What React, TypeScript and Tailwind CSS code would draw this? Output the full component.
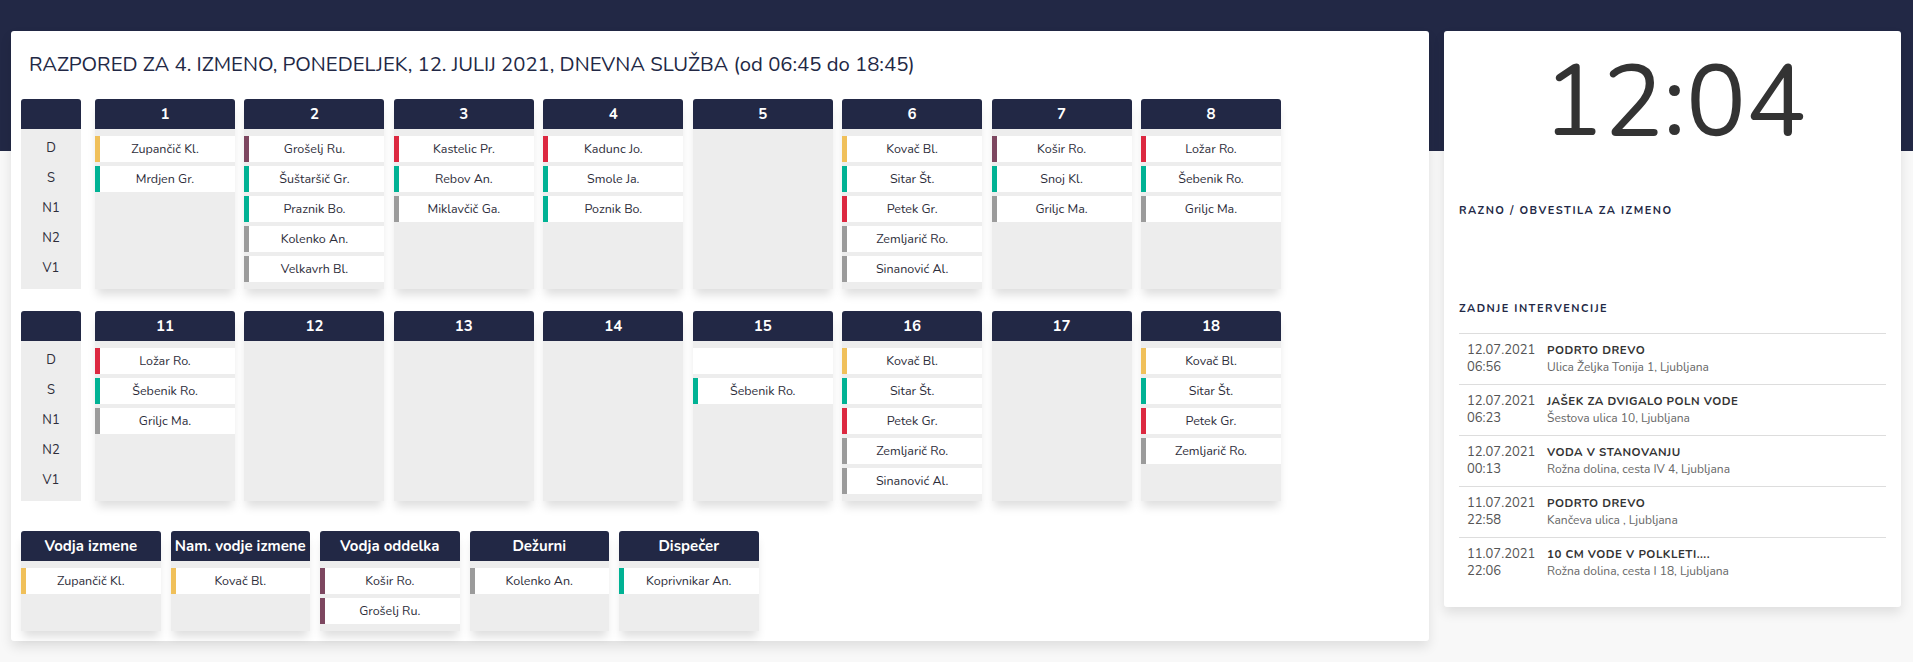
import React from "react";

type Entry = { name: string; color: string } | null;

const Y = "border-l-[#f0c05a]";
const P = "border-l-[#7d4760]";
const T = "border-l-[#00b294]";
const R = "border-l-[#dc2840]";
const G = "border-l-[#9b9b9b]";
const W = "border-l-white";

const row1: { title: string; items: Entry[] }[] = [
  { title: "1", items: [{ name: "Zupančič Kl.", color: Y }, { name: "Mrdjen Gr.", color: T }] },
  {
    title: "2",
    items: [
      { name: "Grošelj Ru.", color: P },
      { name: "Šuštaršič Gr.", color: T },
      { name: "Praznik Bo.", color: T },
      { name: "Kolenko An.", color: G },
      { name: "Velkavrh Bl.", color: G },
    ],
  },
  {
    title: "3",
    items: [
      { name: "Kastelic Pr.", color: R },
      { name: "Rebov An.", color: T },
      { name: "Miklavčič Ga.", color: G },
    ],
  },
  {
    title: "4",
    items: [
      { name: "Kadunc Jo.", color: R },
      { name: "Smole Ja.", color: T },
      { name: "Poznik Bo.", color: T },
    ],
  },
  { title: "5", items: [] },
  {
    title: "6",
    items: [
      { name: "Kovač Bl.", color: Y },
      { name: "Sitar Št.", color: T },
      { name: "Petek Gr.", color: R },
      { name: "Zemljarič Ro.", color: G },
      { name: "Sinanović Al.", color: G },
    ],
  },
  {
    title: "7",
    items: [
      { name: "Košir Ro.", color: P },
      { name: "Snoj Kl.", color: T },
      { name: "Griljc Ma.", color: G },
    ],
  },
  {
    title: "8",
    items: [
      { name: "Ložar Ro.", color: R },
      { name: "Šebenik Ro.", color: T },
      { name: "Griljc Ma.", color: G },
    ],
  },
];

const row2: { title: string; items: Entry[] }[] = [
  {
    title: "11",
    items: [
      { name: "Ložar Ro.", color: R },
      { name: "Šebenik Ro.", color: T },
      { name: "Griljc Ma.", color: G },
    ],
  },
  { title: "12", items: [] },
  { title: "13", items: [] },
  { title: "14", items: [] },
  { title: "15", items: [{ name: "", color: W }, { name: "Šebenik Ro.", color: T }] },
  {
    title: "16",
    items: [
      { name: "Kovač Bl.", color: Y },
      { name: "Sitar Št.", color: T },
      { name: "Petek Gr.", color: R },
      { name: "Zemljarič Ro.", color: G },
      { name: "Sinanović Al.", color: G },
    ],
  },
  { title: "17", items: [] },
  {
    title: "18",
    items: [
      { name: "Kovač Bl.", color: Y },
      { name: "Sitar Št.", color: T },
      { name: "Petek Gr.", color: R },
      { name: "Zemljarič Ro.", color: G },
    ],
  },
];

const row3: { title: string; items: Entry[] }[] = [
  { title: "Vodja izmene", items: [{ name: "Zupančič Kl.", color: Y }] },
  { title: "Nam. vodje izmene", items: [{ name: "Kovač Bl.", color: Y }] },
  { title: "Vodja oddelka", items: [{ name: "Košir Ro.", color: P }, { name: "Grošelj Ru.", color: P }] },
  { title: "Dežurni", items: [{ name: "Kolenko An.", color: G }] },
  { title: "Dispečer", items: [{ name: "Koprivnikar An.", color: T }] },
];

const interventions = [
  { date: "12.07.2021", time: "06:56", title: "PODRTO DREVO", addr: "Ulica Željka Tonija 1, Ljubljana" },
  { date: "12.07.2021", time: "06:23", title: "JAŠEK ZA DVIGALO POLN VODE", addr: "Šestova ulica 10, Ljubljana" },
  { date: "12.07.2021", time: "00:13", title: "VODA V STANOVANJU", addr: "Rožna dolina, cesta IV 4, Ljubljana" },
  { date: "11.07.2021", time: "22:58", title: "PODRTO DREVO", addr: "Kančeva ulica , Ljubljana" },
  { date: "11.07.2021", time: "22:06", title: "10 CM VODE V POLKLETI....", addr: "Rožna dolina, cesta I 18, Ljubljana" },
];

function Column({ title, items, bodyH, w }: { title: string; items: Entry[]; bodyH: string; w: string }) {
  return (
    <div className={`${w} shrink-0 rounded-t-[3px] overflow-hidden shadow-[0_8px_10px_-2px_rgba(0,0,0,0.13)]`}>
      <div className="h-[30px] bg-[#222845] flex items-center justify-center text-white font-bold text-[15px] leading-none">
        {title}
      </div>
      <div className={`${bodyH} bg-[#ededed] pt-[7px] flex flex-col gap-[4px]`}>
        {items.map((it, i) => (
          <div
            key={i}
            className={`h-[26px] bg-white border-l-[5px] ${it?.color ?? W} pr-[5px] flex items-center justify-center text-[12.5px] text-[#2d2d3a]`}
          >
            {it?.name}
          </div>
        ))}
      </div>
    </div>
  );
}

function LabelColumn() {
  return (
    <div className="w-[60px] shrink-0 rounded-t-[3px] overflow-hidden">
      <div className="h-[30px] bg-[#222845]" />
      <div className="h-[160px] bg-[#ededed] pt-[7px] flex flex-col">
        {["D", "S", "N1", "N2", "V1"].map((l) => (
          <div key={l} className="h-[30px] pb-[4px] flex items-center justify-center text-[13px] text-[#2d2d3a]">
            {l}
          </div>
        ))}
      </div>
    </div>
  );
}

function ScheduleRow({ cols }: { cols: { title: string; items: Entry[] }[] }) {
  return (
    <div className="flex">
      <LabelColumn />
      <div className="ml-[14px] flex gap-[9.43px]">
        {cols.map((c) => (
          <Column key={c.title} title={c.title} items={c.items} bodyH="h-[160px]" w="w-[140px]" />
        ))}
      </div>
    </div>
  );
}

export default function App() {
  return (
    <div
      className="min-h-[662px] w-full bg-[linear-gradient(to_bottom,#222845_151px,#f8f8f8_151px)] pt-[31px] pl-[11px] flex items-start"
      style={{ fontFamily: "Nunito, Lato, 'Noto Sans', sans-serif" }}
    >
      {/* Main schedule card */}
      <div className="w-[1418px] h-[610px] bg-white rounded-[3px] shadow-[0_6px_12px_rgba(0,0,0,0.1)] px-[10px] pt-[19px]">
        <h1 className="pl-[8px] text-[20.3px] leading-[28px] text-[#222845] font-normal">
          RAZPORED ZA 4. IZMENO, PONEDELJEK, 12. JULIJ 2021, DNEVNA SLUŽBA (od 06:45 do 18:45)
        </h1>
        <div className="mt-[21px] flex flex-col">
          <ScheduleRow cols={row1} />
          <div className="h-[22px]" />
          <ScheduleRow cols={row2} />
          <div className="h-[30px]" />
          <div className="flex gap-[10px]">
            {row3.map((c) => (
              <Column key={c.title} title={c.title} items={c.items} bodyH="h-[70px]" w="w-[139.5px]" />
            ))}
          </div>
        </div>
      </div>

      {/* Right card */}
      <div className="ml-[15px] w-[457px] h-[576px] bg-white rounded-[3px] shadow-[0_6px_12px_rgba(0,0,0,0.1)] px-[15px]">
        <div className="h-[142px] flex items-center justify-center text-[100px] font-normal text-[#333333] leading-none pl-[4px]">
          12:04
        </div>
        <div className="mt-[31px] text-[11px] font-bold tracking-[1.5px] text-[#222845] leading-[14px]">
          RAZNO / OBVESTILA ZA IZMENO
        </div>
        <div className="mt-[84px] text-[11px] font-bold tracking-[1.5px] text-[#222845] leading-[14px]">
          ZADNJE INTERVENCIJE
        </div>
        <div className="mt-[17px] border-t border-[#dddddd]">
          {interventions.map((it, i) => (
            <div
              key={i}
              className={`h-[51px] flex pl-[8px] pt-[8px] ${i < interventions.length - 1 ? "border-b border-[#dddddd]" : ""}`}
            >
              <div className="w-[80px] shrink-0 text-[13px] leading-[17px] text-[#555555]">
                <div>{it.date}</div>
                <div>{it.time}</div>
              </div>
              <div className="leading-[17px]">
                <div className="text-[11.5px] font-bold tracking-[0.5px] text-[#333333]">{it.title}</div>
                <div className="text-[12px] text-[#666666]">{it.addr}</div>
              </div>
            </div>
          ))}
        </div>
      </div>
    </div>
  );
}
